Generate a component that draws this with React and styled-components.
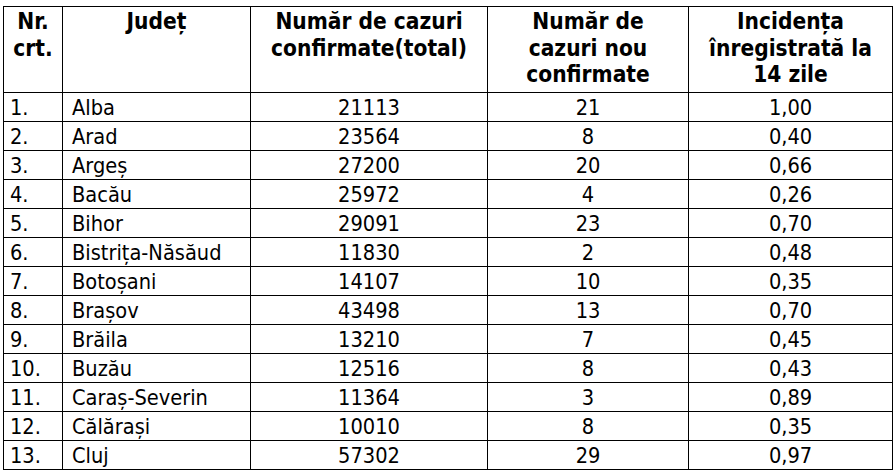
import React from 'react';
import styled, { createGlobalStyle } from 'styled-components';

const GlobalStyle = createGlobalStyle`
  html, body {
    margin: 0;
    padding: 0;
    background: #ffffff;
  }
`;

const Page = styled.div`
  padding: 6px 0 0 3px;
  font-family: "DejaVu Sans Condensed", "DejaVu Sans", sans-serif;
  color: #000000;
`;

const Table = styled.table`
  border-collapse: collapse;
  table-layout: fixed;
  width: 889px;
`;

const HeadCell = styled.th`
  border: 1px solid #000000;
  font-size: 22.5px;
  font-weight: bold;
  line-height: 26.5px;
  text-align: center;
  vertical-align: top;
  height: 86px;
  padding: 1px 1px 0;
  box-sizing: border-box;
  white-space: nowrap;
`;

const Cell = styled.td`
  border: 1px solid #000000;
  font-size: 21.6px;
  height: 26px;
  padding: 2px 0 0 ${(p) => p.$pad || 0}px;
  text-align: ${(p) => p.$align || 'left'};
  vertical-align: middle;
  white-space: nowrap;
  line-height: 26px;
`;

const rows = [
  ['Alba', '21113', '21', '1,00'],
  ['Arad', '23564', '8', '0,40'],
  ['Argeș', '27200', '20', '0,66'],
  ['Bacău', '25972', '4', '0,26'],
  ['Bihor', '29091', '23', '0,70'],
  ['Bistrița-Năsăud', '11830', '2', '0,48'],
  ['Botoșani', '14107', '10', '0,35'],
  ['Brașov', '43498', '13', '0,70'],
  ['Brăila', '13210', '7', '0,45'],
  ['Buzău', '12516', '8', '0,43'],
  ['Caraș-Severin', '11364', '3', '0,89'],
  ['Călărași', '10010', '8', '0,35'],
  ['Cluj', '57302', '29', '0,97'],
];

export default function App() {
  return (
    <Page>
      <GlobalStyle />
      <Table>
        <colgroup>
          <col style={{ width: 59 }} />
          <col style={{ width: 188 }} />
          <col style={{ width: 237 }} />
          <col style={{ width: 201 }} />
          <col style={{ width: 204 }} />
        </colgroup>
        <thead>
          <tr>
            <HeadCell>Nr.<br />crt.</HeadCell>
            <HeadCell>Județ</HeadCell>
            <HeadCell>Număr de cazuri<br />confirmate(total)</HeadCell>
            <HeadCell>Număr de<br />cazuri nou<br />confirmate</HeadCell>
            <HeadCell>Incidența<br />înregistrată la<br />14 zile</HeadCell>
          </tr>
        </thead>
        <tbody>
          {rows.map((r, i) => (
            <tr key={r[0]}>
              <Cell $pad={6}>{i + 1}.</Cell>
              <Cell $pad={9}>{r[0]}</Cell>
              <Cell $align="center">{r[1]}</Cell>
              <Cell $align="center">{r[2]}</Cell>
              <Cell $align="center">{r[3]}</Cell>
            </tr>
          ))}
        </tbody>
      </Table>
    </Page>
  );
}
